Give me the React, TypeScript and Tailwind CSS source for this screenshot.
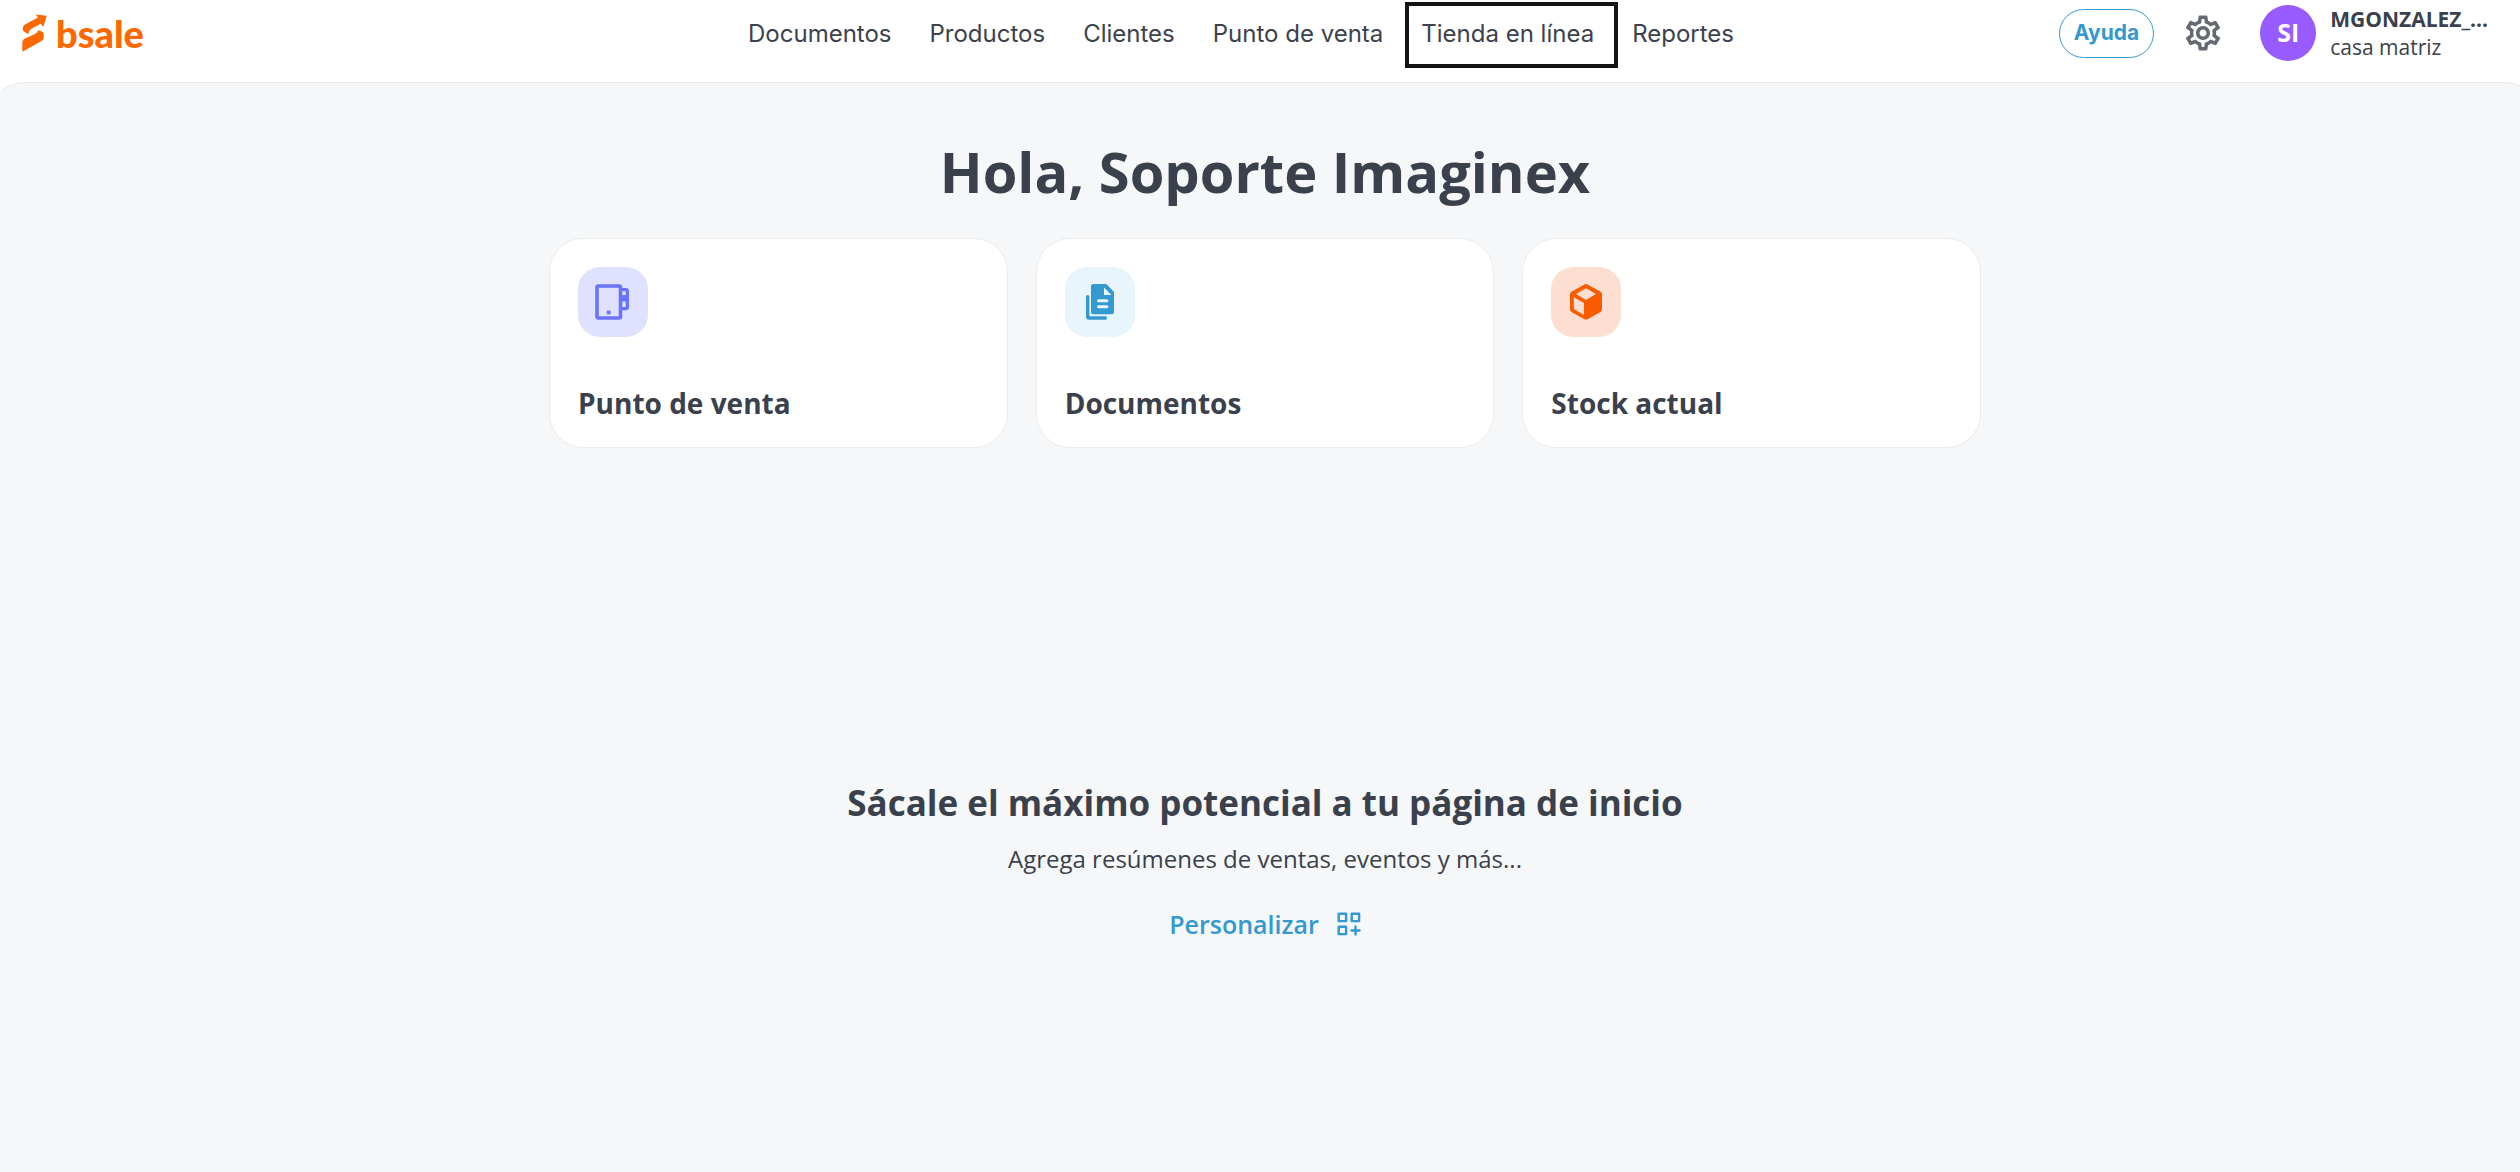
import React from 'react';
import { MdOutlineSettings } from 'react-icons/md';

interface NavItem {
  label: string;
  highlighted?: boolean;
}

interface Shortcut {
  label: string;
  tileClass: string;
  icon: React.ReactNode;
}

const NAV_ITEMS: NavItem[] = [
  { label: 'Documentos' },
  { label: 'Productos' },
  { label: 'Clientes' },
  { label: 'Punto de venta' },
  { label: 'Tienda en línea', highlighted: true },
  { label: 'Reportes' },
];

const PosIcon = () => (
  <svg width="70" height="70" viewBox="0 0 70 70" fill="none" aria-hidden="true">
    <rect x="19" y="19" width="23.5" height="32" rx="1.5" stroke="currentColor" strokeWidth="3.6" />
    <path
      fillRule="evenodd"
      fill="currentColor"
      d="M43 21h5a3 3 0 0 1 3 3v16.3a3 3 0 0 1-3 3h-5zM44 24.3v3.6h3.7v-3.6zM44 34.6v5.5h3.7v-5.5z"
    />
    <rect x="28.8" y="43.6" width="3.8" height="3.7" fill="currentColor" />
  </svg>
);

const DocsIcon = () => (
  <svg width="70" height="70" viewBox="0 0 70 70" fill="none" aria-hidden="true">
    <path d="M22.7 29.7v19.8a1.5 1.5 0 0 0 1.5 1.5h16.2" stroke="currentColor" strokeWidth="3.4" strokeLinecap="round" />
    <path
      fillRule="evenodd"
      fill="currentColor"
      d="M28.5 17h11.8a2.5 2.5 0 0 1 1.8.8l6.2 6.4a2.5 2.5 0 0 1 .7 1.8v18.8a2.5 2.5 0 0 1-2.5 2.5h-18a2.5 2.5 0 0 1-2.5-2.5v-25.3a2.5 2.5 0 0 1 2.5-2.5zM39 20.6v7.4h7.4z"
    />
    <path d="M33.5 33.8h8.4M33.5 39.8h8.4" stroke="#e8f5fc" strokeWidth="3" strokeLinecap="round" />
  </svg>
);

const BoxIcon = () => (
  <svg width="70" height="70" viewBox="0 0 70 70" fill="none" aria-hidden="true">
    <path
      fillRule="evenodd"
      fill="currentColor"
      d="M33.5 17.5a3 3 0 0 1 3 0l13 7.3a3 3 0 0 1 1.5 2.6v14.9a3 3 0 0 1-1.5 2.6l-13 7.3a3 3 0 0 1-3 0l-13-7.3a3 3 0 0 1-1.5-2.6v-14.9a3 3 0 0 1 1.5-2.6zM35 21.3l-10 5.8 10 5.9 10-5.9zM22.8 30.2v11.9l10.2 6v-12z"
    />
  </svg>
);

const CustomizeIcon = () => (
  <svg width="24" height="24" viewBox="0 0 24 24" fill="none" stroke="currentColor" strokeWidth="2.4" strokeLinejoin="round" aria-hidden="true">
    <rect x="1.7" y="1.7" width="7.4" height="7.4" />
    <rect x="14.7" y="1.7" width="7.4" height="7.4" />
    <rect x="1.7" y="14.7" width="7.4" height="7.4" />
    <path d="M18.5 14.5v8M14.5 18.5h8" strokeLinecap="round" />
  </svg>
);

const SHORTCUTS: Shortcut[] = [
  { label: 'Punto de venta', tileClass: 'bg-[#dfe1ff] text-[#6a74fb]', icon: <PosIcon /> },
  { label: 'Documentos', tileClass: 'bg-[#e8f5fc] text-[#3399cf]', icon: <DocsIcon /> },
  { label: 'Stock actual', tileClass: 'bg-[#fddfd2] text-[#fa5a00]', icon: <BoxIcon /> },
];

const Logo = () => (
  <a href="#" className="flex items-center gap-2 text-[#fb6900]">
    <svg width="26" height="38" viewBox="0 0 26 38" fill="currentColor" aria-hidden="true">
      <path d="M13.7.5 24.7 1.7 21.3 12.7 18.5 9.7 9.5 14.8C7.6 16 6.7 17.5 6.5 20.2L2.3 17.8C1.3 17.2.8 16.3.8 15C.8 12.5 1.8 11.3 3.5 10.2L16 3.4z" />
      <path d="M.3 37.7V29C.3 26.5 1.2 25.5 3 24.5L12.5 20.2C14.8 19 15.8 18 16 16.2L19.8 17.4C21.2 18 21.7 19 21.7 20.5V23C21.7 25 21 26 19.5 27z" />
    </svg>
    <span className="font-['Lato',sans-serif] text-[38px] leading-9 font-black">bsale</span>
  </a>
);

const Header = () => (
  <header className="flex h-[82px] items-start justify-between pr-8 pl-[22px]">
    <div className="flex h-[66px] flex-1 items-center">
      <Logo />
    </div>

    <nav className="mr-7 flex h-[68px] items-center gap-[38px] font-['Inter',sans-serif] text-2xl text-[#3b424d]">
      {NAV_ITEMS.map((item) => (
        <a key={item.label} href="#" className="relative whitespace-nowrap">
          {item.label}
          {item.highlighted && (
            <span className="absolute -top-4 -right-6 -bottom-[18px] -left-4 border-4 border-[#141414]" />
          )}
        </a>
      ))}
    </nav>

    <div className="flex h-[66px] flex-1 items-center justify-end">
      <button
        type="button"
        className="h-[49px] rounded-full border border-[#3399cf] px-3.5 font-['Inter',sans-serif] text-[21px] font-bold text-[#3399cf]"
      >
        Ayuda
      </button>
      <button type="button" aria-label="Configuración" className="ml-7 text-[#646972]">
        <MdOutlineSettings size={42} />
      </button>
      <button type="button" className="ml-9 flex items-center gap-3.5 text-left">
        <span className="flex size-14 items-center justify-center rounded-full bg-[#985bff] text-[25px] font-bold text-white">
          SI
        </span>
        <span className="flex flex-col text-[21px] leading-7">
          <span className="font-bold">MGONZALEZ_...</span>
          <span>casa matriz</span>
        </span>
      </button>
    </div>
  </header>
);

const App: React.FC = () => {
  return (
    <div className="flex min-h-screen flex-col overflow-hidden bg-white font-['Open_Sans',sans-serif] text-[#3a414c]">
      <Header />

      <main className="-mr-6 -ml-3.5 flex flex-1 flex-col items-center rounded-t-[40px] border-t border-[#e6e8ea] bg-[#f5f7f9] px-12 pt-[50px]">
        <h1 className="text-[56px] leading-[76px] font-bold">Hola, Soporte Imaginex</h1>

        <section className="mt-[29px] grid w-full max-w-[1432px] grid-cols-3 gap-7">
          {SHORTCUTS.map((shortcut) => (
            <a
              key={shortcut.label}
              href="#"
              className="flex flex-col rounded-[34px] border border-[#e9ebed] bg-white px-7 pt-7 pb-[26px]"
            >
              <span className={`size-[70px] overflow-hidden rounded-[22px] ${shortcut.tileClass}`}>
                {shortcut.icon}
              </span>
              <span className="mt-12 text-[28px] leading-9 font-bold">{shortcut.label}</span>
            </a>
          ))}
        </section>

        <section className="mt-[330px] flex flex-col items-center">
          <h2 className="text-[35px] leading-[50px] font-bold">Sácale el máximo potencial a tu página de inicio</h2>
          <p className="mt-[13px] text-2xl leading-9">Agrega resúmenes de ventas, eventos y más...</p>
          <button type="button" className="mt-[29px] flex items-center gap-[18px] text-[25px] leading-9 font-semibold text-[#3399cf]">
            Personalizar
            <CustomizeIcon />
          </button>
        </section>
      </main>
    </div>
  );
};

export default App;
